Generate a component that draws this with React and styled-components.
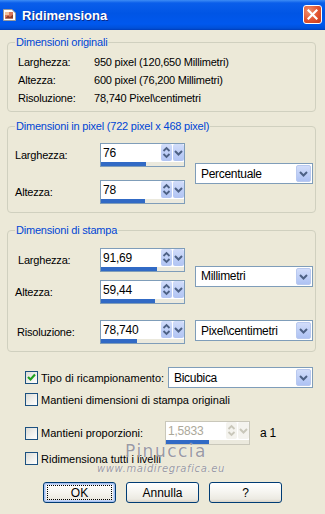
import styled, { createGlobalStyle } from "styled-components";

const Global = createGlobalStyle`
  html, body {
    margin: 0;
    padding: 0;
    background: #ece9d8;
  }
  body {
    font-family: "Liberation Sans", Arial, sans-serif;
    font-size: 11px;
    letter-spacing: -0.2px;
    color: #000;
  }
`;

function PageIcon() {
  return (
    <svg width="15" height="14" viewBox="0 0 15 14">
      <path d="M1.5 1.5 H10 L13.5 5 V12.5 H1.5 Z" fill="#fdfdfd" stroke="#9a9a9a" />
      <rect x="3" y="4" width="8" height="6.5" fill="#d9775a" />
      <rect x="3" y="4" width="4" height="3" fill="#f2c29a" />
      <path d="M3 10.5 L6 7.5 L8 9 L11 6.5 V10.5 Z" fill="#8f3c27" />
    </svg>
  );
}

function CloseIcon() {
  return (
    <svg width="11" height="11" viewBox="0 0 11 11">
      <path d="M1.5 1.5 L9.5 9.5 M9.5 1.5 L1.5 9.5" stroke="#fff" strokeWidth="2.2" strokeLinecap="square" />
    </svg>
  );
}

function UpDown({ color }) {
  return (
    <svg width="11" height="17" viewBox="0 0 11 17">
      <path d="M2.5 7 L5.5 4 L8.5 7" stroke={color} strokeWidth="1.8" fill="none" />
      <path d="M2.5 10 L5.5 13 L8.5 10" stroke={color} strokeWidth="1.8" fill="none" />
    </svg>
  );
}

function Chevron({ color, w = 11, h = 17 }) {
  const cx = w / 2;
  const cy = h / 2;
  return (
    <svg width={w} height={h} viewBox={`0 0 ${w} ${h}`}>
      <path
        d={`M${cx - 3.5} ${cy - 1.5} L${cx} ${cy + 2} L${cx + 3.5} ${cy - 1.5}`}
        stroke={color}
        strokeWidth="2"
        fill="none"
      />
    </svg>
  );
}

function CheckMark() {
  return (
    <svg width="11" height="11" viewBox="0 0 11 11">
      <path d="M2 5 L4.5 7.5 L9 2.5" stroke="#21a121" strokeWidth="2.2" fill="none" />
    </svg>
  );
}

const Window = styled.div`
  position: relative;
  width: 325px;
  height: 514px;
  background: #ece9d8;
  overflow: hidden;
`;

const TitleBar = styled.div`
  height: 30px;
  box-sizing: border-box;
  display: flex;
  align-items: center;
  padding: 0 2px 0 2px;
  background: linear-gradient(
    to bottom,
    #3d8cf5 0%,
    #0a5eea 10%,
    #0055e5 45%,
    #0058ee 80%,
    #0050d8 94%,
    #003cb8 100%
  );
`;

const Title = styled.span`
  margin-left: 5px;
  flex: 1;
  font-size: 13px;
  font-weight: bold;
  letter-spacing: 0;
  color: #fff;
  text-shadow: 1px 1px 0 #0a2a8a;
`;

const CloseButton = styled.div`
  width: 19px;
  height: 19px;
  box-sizing: border-box;
  margin-right: 1px;
  margin-top: -2px;
  display: flex;
  align-items: center;
  justify-content: center;
  border: 1px solid #fff;
  border-radius: 3px;
  background: radial-gradient(circle at 30% 30%, #f0906e 0%, #e2532f 55%, #c5391b 100%);
`;

const Content = styled.div`
  display: flex;
  flex-direction: column;
  padding: 6px 9px 0 7px;
`;

const Group = styled.fieldset`
  margin: ${(p) => p.$top || 0}px 0 0 0;
  padding: 0;
  border: 1px solid #d0d0bf;
  border-radius: 4px;
  min-width: 0;
`;

const Legend = styled.legend`
  margin-left: 7px;
  padding: 0 1px;
  line-height: 13px;
  color: #0046d5;
`;

const InfoGrid = styled.div`
  display: grid;
  grid-template-columns: 76px 1fr;
  grid-auto-rows: 18px;
  align-items: center;
  padding: 4px 0 4px 10px;
`;

const FormGrid = styled.div`
  display: grid;
  grid-template-columns: ${(p) => p.$first}px 85px 118px;
  grid-template-rows: ${(p) => p.$rows};
  column-gap: 10px;
  row-gap: ${(p) => p.$gap}px;
  align-items: center;
  padding: ${(p) => p.$pad};
`;

const Label = styled.span`
  grid-column: 1;
  grid-row: ${(p) => p.$row};
  margin-left: ${(p) => p.$shift || 0}px;
`;

const SpinBox = styled.div`
  grid-row: ${(p) => p.$row || "auto"};
  flex-shrink: 0;
  width: 85px;
  height: 24px;
  box-sizing: border-box;
  border: 1px solid ${(p) => (p.$disabled ? "#c9c7ba" : "#7f9db9")};
  background: #fff;
  display: flex;
  flex-direction: column;
`;

const SpinTop = styled.div`
  height: 17px;
  display: flex;
`;

const SpinText = styled.div`
  flex: 1;
  padding-left: 2px;
  display: flex;
  align-items: center;
  font-size: 12px;
  color: ${(p) => (p.$disabled ? "#aca899" : "#000")};
`;

const SpinButton = styled.div`
  width: 11px;
  height: 17px;
  margin-left: ${(p) => (p.$gap ? 1 : 0)}px;
  border-radius: 2px;
  background: ${(p) =>
    p.$disabled
      ? "#f4f3ee"
      : "linear-gradient(to bottom, #d2ddfa 0%, #bccdf6 60%, #b1c4f3 100%)"};
`;

const Track = styled.div`
  height: 4px;
  margin-top: 1px;
  background: #ebe9dd;
`;

const Fill = styled.div`
  height: 100%;
  background: #316ac5;
`;

const Combo = styled.div`
  grid-column: ${(p) => p.$col || "auto"};
  grid-row: ${(p) => p.$row || "auto"};
  align-self: ${(p) => p.$align || "center"};
  flex-shrink: 0;
  width: ${(p) => p.$width || 118}px;
  height: 21px;
  box-sizing: border-box;
  border: 1px solid #7f9db9;
  background: #fff;
  display: flex;
  align-items: center;
  padding: 1px;
`;

const ComboText = styled.span`
  flex: 1;
  padding-left: 4px;
  font-size: 12px;
  letter-spacing: -0.3px;
`;

const ComboButton = styled.div`
  width: 15px;
  height: 17px;
  border-radius: 2px;
  background: linear-gradient(to bottom, #d2ddfa 0%, #bccdf6 60%, #aec2f3 100%);
  border: 1px solid #b9c9ef;
  box-sizing: border-box;
  display: flex;
  align-items: center;
  justify-content: center;
`;

const Options = styled.div`
  display: flex;
  flex-direction: column;
  padding-left: 18px;
`;

const OptionRow = styled.div`
  display: flex;
  align-items: center;
  height: ${(p) => p.$height}px;
  margin-top: ${(p) => p.$top}px;
`;

const CheckLabel = styled.label`
  display: flex;
  align-items: center;
  gap: 3px;
  flex-shrink: 0;
  width: ${(p) => (p.$width ? `${p.$width}px` : "auto")};
  white-space: nowrap;
  font-size: 11px;
  letter-spacing: 0;
`;

const Box = styled.span`
  width: 13px;
  height: 13px;
  flex-shrink: 0;
  box-sizing: border-box;
  border: 1px solid #1c5180;
  background: linear-gradient(135deg, #dcdcd7 0%, #f2f2ef 60%, #ffffff 100%);
  display: flex;
  align-items: center;
  justify-content: center;
`;

const Suffix = styled.span`
  margin-left: 10px;
  font-size: 12px;
`;

const ButtonRow = styled.div`
  display: flex;
  gap: 10px;
  margin-top: 17px;
  padding-left: 36px;
`;

const Button = styled.div`
  width: 73px;
  height: 21px;
  box-sizing: border-box;
  border: 1px solid #003c74;
  border-radius: 3px;
  background: linear-gradient(to bottom, #ffffff 0%, #f5f4ef 50%, #eceae2 85%, #d8d3c8 100%);
  box-shadow: ${(p) => (p.$default ? "inset 0 0 0 1px #a9c2f0, inset 0 0 0 2px #c6d7f7" : "none")};
  display: flex;
  align-items: center;
  justify-content: center;
  font-size: 12px;
  letter-spacing: 0;
`;

const Focus = styled.span`
  display: flex;
  align-items: center;
  justify-content: center;
  width: 65px;
  height: 15px;
  box-sizing: border-box;
  border: 1px dotted #000;
`;

const Watermark = styled.div`
  position: absolute;
  left: ${(p) => p.$x}px;
  top: ${(p) => p.$y}px;
  font-family: "DejaVu Sans", sans-serif;
  font-size: ${(p) => p.$size}px;
  font-style: ${(p) => (p.$italic ? "italic" : "normal")};
  letter-spacing: ${(p) => p.$spacing}px;
  color: rgba(110, 110, 125, 0.7);
  text-shadow: 0 0 1px #fff;
  pointer-events: none;
  white-space: nowrap;
`;

function Spin({ value, fill, row, disabled }) {
  const arrow = disabled ? "#c9c7ba" : "#4d6185";
  return (
    <SpinBox $row={row} $disabled={disabled}>
      <SpinTop>
        <SpinText $disabled={disabled}>{value}</SpinText>
        <SpinButton $disabled={disabled}>
          <UpDown color={arrow} />
        </SpinButton>
        <SpinButton $gap $disabled={disabled}>
          <Chevron color={arrow} />
        </SpinButton>
      </SpinTop>
      <Track>
        <Fill style={{ width: fill }} />
      </Track>
    </SpinBox>
  );
}

function Select({ text, ...rest }) {
  return (
    <Combo {...rest}>
      <ComboText>{text}</ComboText>
      <ComboButton>
        <Chevron color="#4d6185" w={13} h={15} />
      </ComboButton>
    </Combo>
  );
}

function Check({ checked, children, width }) {
  return (
    <CheckLabel $width={width}>
      <Box>{checked && <CheckMark />}</Box>
      {children}
    </CheckLabel>
  );
}

export default function App() {
  return (
    <Window>
      <Global />
      <TitleBar>
        <PageIcon />
        <Title>Ridimensiona</Title>
        <CloseButton>
          <CloseIcon />
        </CloseButton>
      </TitleBar>
      <Content>
        <Group>
          <Legend>Dimensioni originali</Legend>
          <InfoGrid>
            <span>Larghezza:</span>
            <span>950 pixel (120,650 Millimetri)</span>
            <span>Altezza:</span>
            <span>600 pixel (76,200 Millimetri)</span>
            <span>Risoluzione:</span>
            <span>78,740 Pixel\centimetri</span>
          </InfoGrid>
        </Group>

        <Group $top={8}>
          <Legend>Dimensioni in pixel (722 pixel x 468 pixel)</Legend>
          <FormGrid $first={75} $rows="24px 24px" $gap={13} $pad="10px 0 8px 7px">
            <Label $row={1}>Larghezza:</Label>
            <Spin row={1} value="76" fill={45} />
            <Label $row={2}>Altezza:</Label>
            <Spin row={2} value="78" fill={44} />
            <Select $col={3} $row="1 / 3" text="Percentuale" />
          </FormGrid>
        </Group>

        <Group $top={11}>
          <Legend>Dimensioni di stampa</Legend>
          <FormGrid $first={74} $rows="24px 24px 0 24px" $gap={8} $pad="11px 0 7px 8px">
            <Label $row={1} $shift={2}>Larghezza:</Label>
            <Spin row={1} value="91,69" fill={56} />
            <Label $row={2} $shift={-1}>Altezza:</Label>
            <Spin row={2} value="59,44" fill={54} />
            <Select $col={3} $row="1 / 3" text="Millimetri" />
            <Label $row={4} $shift={1}>Risoluzione:</Label>
            <Spin row={4} value="78,740" fill={36} />
            <Select $col={3} $row={4} $align="start" text="Pixel\centimetri" />
          </FormGrid>
        </Group>

        <Options>
          <OptionRow $height={21} $top={15}>
            <Check checked width={143}>Tipo di ricampionamento:</Check>
            <Select $width={145} text="Bicubica" />
          </OptionRow>
          <OptionRow $height={13} $top={5}>
            <Check>Mantieni dimensioni di stampa originali</Check>
          </OptionRow>
          <OptionRow $height={24} $top={15}>
            <Check width={140}>Mantieni proporzioni:</Check>
            <Spin disabled value="1,5833" fill={43} />
            <Suffix>a 1</Suffix>
          </OptionRow>
          <OptionRow $height={13} $top={7}>
            <Check>Ridimensiona tutti i livelli</Check>
          </OptionRow>
        </Options>

        <ButtonRow>
          <Button $default>
            <Focus>OK</Focus>
          </Button>
          <Button>Annulla</Button>
          <Button>?</Button>
        </ButtonRow>
      </Content>
      <Watermark $x={125} $y={441} $size={17} $spacing={1.5}>
        Pinuccia
      </Watermark>
      <Watermark $x={97} $y={463} $size={10} $spacing={0.6} $italic>
        www.maidiregrafica.eu
      </Watermark>
    </Window>
  );
}
